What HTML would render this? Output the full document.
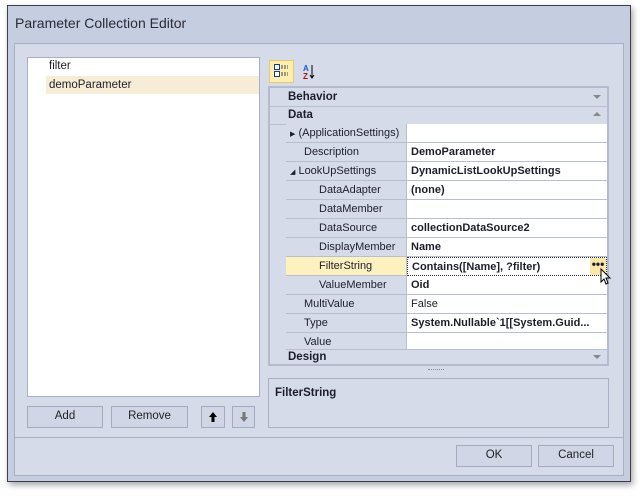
<!DOCTYPE html>
<html><head><style>
*{box-sizing:border-box;margin:0;padding:0}
body{width:642px;height:497px;background:#fff;position:relative;font-family:"Liberation Sans",sans-serif;font-size:11px;color:#1e1e2a;overflow:hidden}
.a{position:absolute}
.win{left:7px;top:5px;width:624px;height:477px;background:#c5cde0;border:1px solid #3a3f4a;box-shadow:2px 3px 6px rgba(0,0,0,.35)}
.title{left:15px;top:15px;font-size:14px;color:#2b2b33}
.body{left:14px;top:43px;width:610px;height:433px;background:#d6dbea;border:1px solid #a7afc2}
.list{left:27px;top:57px;width:233px;height:340px;background:#fff;border:1px solid #a7afc2}
.btn{background:#d0d6e5;border:1px solid #a3abbd;text-align:center;line-height:19px;font-size:11.5px;color:#222}
.grid{left:268px;top:86px;width:341px;height:280px;background:#d6dbea;border:2px solid #b4bbcc}
.row{position:absolute;left:0;width:337px;height:19px}
.n{position:absolute;left:16px;width:121px;height:19px;background:#d6dbea;border-right:1px solid #b8bfcf;border-bottom:1px solid #b8bfcf;line-height:18px;padding-left:18px}
.v{position:absolute;left:137px;right:0;height:19px;background:#fff;border-bottom:1px solid #b8bfcf;line-height:18px;padding-left:4px;font-weight:bold}
.cat{font-weight:bold;line-height:18px;padding-left:18px;font-size:11.5px;border-bottom:1px solid #b8bfcf}
.arr{position:absolute;right:6px;top:7px;width:0;height:0;border-left:4px solid transparent;border-right:4px solid transparent}
</style></head><body>
<div class="a win"></div>
<div class="a title">Parameter Collection Editor</div>
<div class="a body"></div>
<div class="a list">
 <div class="a" style="left:21px;top:2px;font-size:11.5px">filter</div>
 <div class="a" style="left:18px;top:18px;width:213px;height:18px;background:#f7ecd6;line-height:18px;padding-left:3px;font-size:11.5px">demoParameter</div>
</div>
<div class="a btn" style="left:27px;top:406px;width:76px;height:22px">Add</div>
<div class="a btn" style="left:111px;top:406px;width:77px;height:22px">Remove</div>
<div class="a btn" style="left:201px;top:406px;width:24px;height:22px"><svg width="10" height="12" style="margin-top:4px"><path d="M5 1L1 6h2.5v5h3V6H9z" fill="#000"/></svg></div>
<div class="a btn" style="left:232px;top:406px;width:23px;height:22px"><svg width="10" height="12" style="margin-top:4px"><path d="M5 11L1 6h2.5V1h3v5H9z" fill="#777"/></svg></div>
<div class="a" style="left:269px;top:60px;width:25px;height:23px;background:#fbeeb0;border:1px solid #e6c96a"></div>
<svg class="a" style="left:272px;top:63px" width="50" height="18">
<rect x="2.5" y="1.5" width="5" height="5" fill="#fff" stroke="#1a3d8a"/><rect x="2.5" y="8.5" width="5" height="5" fill="#fff" stroke="#1a3d8a"/>
<path d="M9 3h7M9 5h7M9 10h7M9 12h7" stroke="#444" stroke-dasharray="2 1"/>
<text x="31" y="8" font-size="8" font-weight="bold" fill="#1a5ad0" font-family="Liberation Sans">A</text>
<text x="31" y="16" font-size="8" font-weight="bold" fill="#b01010" font-family="Liberation Sans">Z</text>
<path d="M40 2v13M38 12l2 3 2-3" stroke="#000" fill="none"/>
</svg>
<div class="a grid">
 <div class="row cat" style="top:0">Behavior<div class="arr" style="border-top:4px solid #888"></div></div>
 <div class="row cat" style="top:18px">Data<div class="arr" style="border-bottom:4px solid #888;top:6px"></div></div>
 <div class="row" style="top:36px"><div class="n" style="padding-left:4px"><span style="font-size:7px">▶</span> (ApplicationSettings)</div><div class="v"></div></div>
 <div class="row" style="top:55px"><div class="n">Description</div><div class="v">DemoParameter</div></div>
 <div class="row" style="top:74px"><div class="n" style="padding-left:4px"><span style="font-size:7px">◢</span> LookUpSettings</div><div class="v">DynamicListLookUpSettings</div></div>
 <div class="row" style="top:93px"><div class="n" style="padding-left:33px">DataAdapter</div><div class="v">(none)</div></div>
 <div class="row" style="top:112px"><div class="n" style="padding-left:33px">DataMember</div><div class="v"></div></div>
 <div class="row" style="top:131px"><div class="n" style="padding-left:33px">DataSource</div><div class="v">collectionDataSource2</div></div>
 <div class="row" style="top:150px"><div class="n" style="padding-left:33px">DisplayMember</div><div class="v">Name</div></div>
 <div class="row" style="top:169px"><div class="n" style="padding-left:33px;background:#fdf1c0">FilterString</div><div class="v" style="border:1px dotted #333">Contains([Name], ?filter)<div class="a" style="right:0;top:0;width:16px;height:17px;background:#fbe7a8;text-align:center;line-height:12px;font-size:12px">•••</div></div></div>
 <div class="row" style="top:188px"><div class="n" style="padding-left:33px">ValueMember</div><div class="v">Oid</div></div>
 <div class="row" style="top:207px"><div class="n">MultiValue</div><div class="v" style="font-weight:normal">False</div></div>
 <div class="row" style="top:226px"><div class="n">Type</div><div class="v">System.Nullable`1[[System.Guid...</div></div>
 <div class="row" style="top:245px;height:17px"><div class="n" style="height:17px">Value</div><div class="v" style="height:17px"></div></div>
 <div class="row cat" style="top:260px;border:0">Design<div class="arr" style="border-top:4px solid #888"></div></div>
</div>
<svg class="a" style="left:600px;top:268px" width="12" height="18"><path d="M1 1v13l3-3 2 5 2-1-2-5h4z" fill="#fff" stroke="#000"/></svg>
<div class="a" style="left:428px;top:369px;width:16px;border-top:1px dotted #889"></div>
<div class="a" style="left:268px;top:378px;width:341px;height:50px;border:1px solid #a7afc2;font-weight:bold;padding:8px 6px;font-size:11.5px">FilterString</div>
<div class="a" style="left:15px;top:437px;width:608px;border-top:1px solid #a7afc2"></div>
<div class="a btn" style="left:456px;top:445px;width:76px;height:22px">OK</div>
<div class="a btn" style="left:538px;top:445px;width:76px;height:22px">Cancel</div>
</body></html>
